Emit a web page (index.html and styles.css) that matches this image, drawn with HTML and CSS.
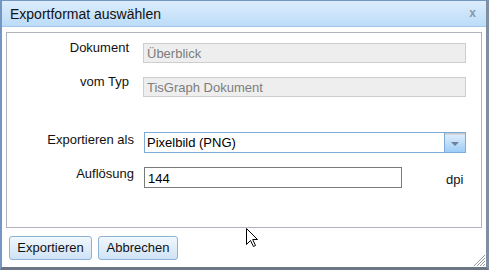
FILE: index.html
```html
<!DOCTYPE html>
<html lang="de">
<head>
<meta charset="utf-8">
<title>Exportformat auswählen</title>
<link rel="stylesheet" href="styles.css">
</head>
<body>
<div class="win">
  <div class="head">
    <span class="title">Exportformat auswählen</span>
    <span class="close">x</span>
  </div>
  <div class="body">
    <div class="panel">
      <div class="row row1">
        <label class="lbl lbl-narrow">Dokument</label>
        <div class="field field-disabled">Überblick</div>
      </div>
      <div class="row row2">
        <label class="lbl lbl-narrow">vom Typ</label>
        <div class="field field-disabled">TisGraph Dokument</div>
      </div>
      <div class="row row3">
        <label class="lbl">Exportieren als</label>
        <div class="combo">
          <span class="combo-text">Pixelbild (PNG)</span>
          <span class="trigger"><span class="arrow"></span></span>
        </div>
      </div>
      <div class="row row4">
        <label class="lbl lbl-low">Auflösung</label>
        <div class="field field-num">144</div>
        <span class="unit">dpi</span>
      </div>
    </div>
    <div class="bbar">
      <button class="btn btn-export">Exportieren</button>
      <button class="btn btn-cancel">Abbrechen</button>
    </div>
  </div>
  <svg class="cursor" width="13" height="20" viewBox="0 0 13 20">
    <path d="M0.5 0.5 L0.5 16.5 L4.5 12.5 L7.5 18.5 L9.5 17.5 L6.7 11.5 L11.5 11.5 Z" fill="#fff" stroke="#000" stroke-width="1"/>
  </svg>
  <svg class="grip" width="13" height="13" viewBox="0 0 13 13">
    <g stroke="#8f9aa6" stroke-width="1">
      <line x1="12" y1="1" x2="1" y2="12"/>
      <line x1="12" y1="4" x2="4" y2="12"/>
      <line x1="12" y1="7" x2="7" y2="12"/>
      <line x1="12" y1="10" x2="10" y2="12"/>
    </g>
  </svg>
</div>
</body>
</html>
```

FILE: styles.css
```css
html, body {
  margin: 0;
  padding: 0;
  background: #ffffff;
}

body {
  font-family: "Liberation Sans", Arial, sans-serif;
  font-size: 13px;
  color: #000;
}

.win {
  position: relative;
  width: 489px;
  height: 270px;
  box-sizing: border-box;
  border-top: 1px solid #7397c2;
  border-left: 2px solid #7397c2;
  border-right: 3px solid #7f8fa1;
  border-bottom: 3px solid #6c7682;
  background: #fff;
  display: flex;
  flex-direction: column;
  overflow: hidden;
}

.head {
  height: 25px;
  border-bottom: 1px solid #a3c6ea;
  background: linear-gradient(#dcedfd, #bcdcf9);
  display: flex;
  align-items: center;
  padding: 0 10px 0 8px;
  flex: none;
}

.title {
  font-size: 14px;
  color: #111;
  flex: 1;
  line-height: 16px;
}

.close {
  font-size: 12px;
  font-weight: bold;
  color: #8799ab;
  line-height: 12px;
  margin-top: -1px;
}

.body {
  flex: 1;
  display: flex;
  flex-direction: column;
  padding: 5px 4px 0 4px;
}

.panel {
  height: 196px;
  box-sizing: border-box;
  border: 1px solid #b0b4bb;
  padding-top: 10px;
}

.row {
  display: flex;
  align-items: flex-start;
}

.row2 { margin-top: 14px; }
.row3 { margin-top: 35px; }
.row4 { margin-top: 14px; }

.lbl {
  width: 137px;
  box-sizing: border-box;
  text-align: right;
  padding-right: 10px;
  line-height: 15px;
  margin-top: 0;
  color: #111;
}

.lbl-narrow {
  padding-right: 15px;
  margin-top: -3px;
}

.lbl-low {
  margin-top: -1px;
}

.field {
  box-sizing: border-box;
  height: 20px;
  line-height: 18px;
  padding: 0 3px;
  border: 1px solid #cdcdcd;
  background: #fff;
}

.field-disabled {
  width: 323px;
  background: #eeeeee;
  color: #7d7d7d;
  margin-left: -1px;
  padding-top: 1px;
}

.combo {
  width: 322px;
  height: 21px;
  box-sizing: border-box;
  border: 1px solid #7eaad6;
  display: flex;
  background: #fff;
}

.combo-text {
  flex: 1;
  line-height: 20px;
  padding-left: 2px;
}

.trigger {
  width: 20px;
  border-left: 1px solid #7eaad6;
  background: linear-gradient(#c9c9c9 0, #c9c9c9 1px, #dbecfc 2px, #9dcdf6 100%);
  display: flex;
  align-items: center;
  justify-content: center;
}

.arrow {
  width: 0;
  height: 0;
  border-left: 4px solid transparent;
  border-right: 4px solid transparent;
  border-top: 4px solid #6e8199;
  margin-top: 2px;
}

.field-num {
  width: 258px;
  height: 21px;
  border-color: #7a7a7a;
  line-height: 20px;
  padding-left: 3px;
  padding-top: 1px;
}

.unit {
  margin-left: 44px;
  margin-top: 5px;
  line-height: 15px;
  color: #111;
}

.bbar {
  display: flex;
  gap: 6px;
  padding: 8px 0 0 3px;
}

.btn {
  font-family: "Liberation Sans", Arial, sans-serif;
  font-size: 13px;
  color: #111;
  height: 24px;
  box-sizing: border-box;
  border: 1px solid #8eb1d6;
  border-radius: 3px;
  background: linear-gradient(#f1f7fd, #cfe3f7);
  padding: 0;
  line-height: 20px;
}

.btn-export { width: 83px; }
.btn-cancel { width: 80px; }

.cursor {
  position: absolute;
  left: 244px;
  top: 227px;
}

.grip {
  position: absolute;
  right: 0;
  bottom: 0;
}
```
